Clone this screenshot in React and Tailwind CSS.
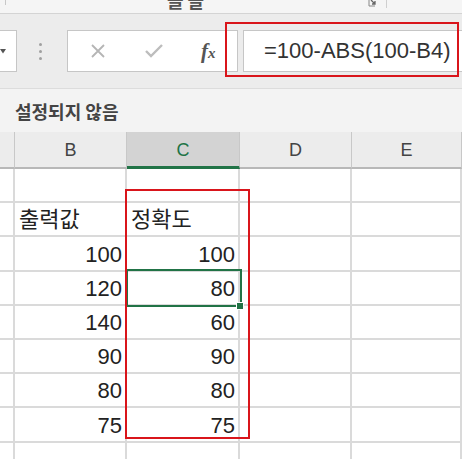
const FONT = { fontFamily: '"Liberation Sans", "Noto Sans CJK KR", sans-serif' };

const COLS = [
  { key: "A", w: "w-[15px]" },
  { key: "B", w: "w-[112px]" },
  { key: "C", w: "w-[113px]" },
  { key: "D", w: "w-[112px]" },
  { key: "E", w: "flex-1" },
];

const ROWS = [
  ["", ""],
  ["출력값", "정확도"],
  [100, 100],
  [120, 80],
  [140, 60],
  [90, 90],
  [80, 80],
  [75, 75],
  ["", ""],
];

function Cell({ value, w }) {
  const isText = typeof value === "string";
  return (
    <div
      className={`${w} h-[34.2px] shrink-0 border-r-2 border-b-2 border-[#dadada] flex items-end pb-[4px] text-[22px] leading-none text-[#222] ${
        isText ? "justify-start pl-[4px]" : "justify-end pr-[3px]"
      }`}
    >
      {value}
    </div>
  );
}

export default function App() {
  return (
    <div className="w-[462px] h-[459px] overflow-hidden bg-white relative" style={FONT}>
      {/* ribbon tail */}
      <div className="h-[14px] bg-[#f5f5f5] border-b border-[#d4d4d4] relative overflow-hidden flex">
        <div className="w-px h-[5px] bg-[#c8c8c8] ml-[5px]" />
        <div className="ml-[161px] -mt-[11px] text-[18px] font-bold text-[#555] tracking-[4px]">글꼴</div>
        <svg className="ml-[160px] mt-0" width="9" height="8" viewBox="0 0 9 8">
          <path d="M1 0v6h6" stroke="#888" strokeWidth="1" fill="none" />
          <path d="M3 0l4 4M7 1v3H4" stroke="#666" strokeWidth="1.3" fill="none" />
        </svg>
        <div className="ml-[9px] w-px h-[8px] bg-[#cfcfcf]" />
      </div>

      {/* formula bar */}
      <div className="relative h-[75px] bg-[#ececec] border-b border-[#dcdcdc] flex items-start pt-[16px]">
        <div className="w-[17px] h-[42px] bg-white border border-l-0 border-[#c6c6c6] flex items-center">
          <svg width="6" height="5" viewBox="0 0 6 5" className="mt-[1px]">
            <path d="M0 0h6L3 4.5z" fill="#555" />
          </svg>
        </div>
        <div className="ml-[22px] w-[3px] h-[42px] flex flex-col items-center justify-center gap-[4px]">
          <div className="w-[3px] h-[3px] rounded-full bg-[#a0a0a0]" />
          <div className="w-[3px] h-[3px] rounded-full bg-[#a0a0a0]" />
          <div className="w-[3px] h-[3px] rounded-full bg-[#a0a0a0]" />
        </div>
        <div className="ml-[25px] w-[171px] h-[42px] bg-white border border-[#c6c6c6] flex items-center">
          <svg className="ml-[23px]" width="14" height="14" viewBox="0 0 14 14">
            <path d="M1 1l12 12M13 1L1 13" stroke="#b5b5b5" strokeWidth="1.8" />
          </svg>
          <svg className="ml-[40px]" width="18" height="14" viewBox="0 0 18 14">
            <path d="M1 7l5 5L17 1" stroke="#bdbdbd" strokeWidth="2.4" fill="none" />
          </svg>
          <span
            className="ml-[38px] text-[#555] italic font-bold leading-none"
            style={{ fontFamily: '"Liberation Serif", serif' }}
          >
            <span className="text-[21px]">f</span>
            <span className="text-[15px]">x</span>
          </span>
        </div>
        <div className="ml-[5px] -mr-[2px] flex-1 h-[42px] bg-white border border-[#c6c6c6] flex items-center pl-[20px] text-[22px] text-[#333] leading-none">
          =100-ABS(100-B4)
        </div>
        <div className="absolute left-[225px] top-[8px] w-[234px] h-[55px] border-2 border-[#d9151b]" />
      </div>

      {/* sensitivity label bar */}
      <div className="h-[43px] bg-[#f3f3f3] flex items-center pl-[15px] pt-[1px]">
        <span className="text-[18px] font-bold text-[#444]" style={{ fontFamily: '"Noto Sans CJK KR", sans-serif' }}>
          설정되지 않음
        </span>
      </div>

      {/* column headers */}
      <div className="flex h-[37px]">
        {COLS.map((c) => {
          const active = c.key === "C";
          return (
            <div
              key={c.key}
              className={`${c.w} shrink-0 flex items-center justify-center pt-[2px] text-[18px] border-r border-[#c8c8c8] ${
                active
                  ? "bg-[#d3d3d3] text-[#217346] border-b-[3px] border-b-[#217346]"
                  : "bg-[#ececec] text-[#444] border-b-2 border-b-[#b8b8b8]"
              }`}
            >
              {c.key === "A" ? "" : c.key}
            </div>
          );
        })}
      </div>

      {/* cells */}
      <div className="relative">
        {ROWS.map(([b, cv], i) => (
          <div key={i} className="flex">
            <Cell value="" w="w-[15px]" />
            <Cell value={b} w="w-[112px]" />
            <Cell value={cv} w="w-[113px]" />
            <Cell value="" w="w-[112px]" />
            <Cell value="" w="flex-1" />
          </div>
        ))}

        {/* active cell */}
        <div className="absolute left-[126px] top-[100px] w-[116px] h-[38px] border-2 border-[#217346]" />
        <div className="absolute left-[236px] top-[133px] w-[8px] h-[8px] bg-[#217346] border border-white" />

        {/* red highlight */}
        <div className="absolute left-[125px] top-[20px] w-[125px] h-[250px] border-2 border-[#d9151b]" />
      </div>
    </div>
  );
}
